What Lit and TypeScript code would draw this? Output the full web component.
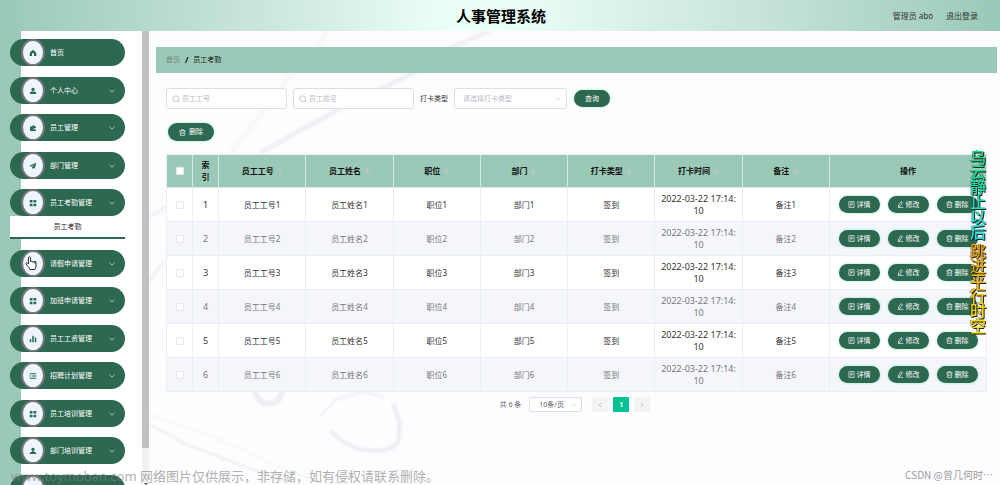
import { LitElement, html, css, svg, nothing } from "lit";
import { customElement, state } from "lit/decorators.js";

const icons: Record<string, unknown> = {
  home: svg`<path fill="currentColor" d="M8 1.500 1.500 7.500V14H6v-4a2 2 0 0 1 4 0v4h4.500V7.500z"/>`,
  user: svg`<circle cx="8" cy="4.800" r="3.300" fill="currentColor"/><path fill="currentColor" d="M1.500 14c0-3.500 2-5 4-5h5c2 0 4 1.500 4 5z"/>`,
  wallet: svg`<path fill="currentColor" d="M2 6 10 2l1.500 3H14v3h-3.500a1.500 1.500 0 0 0 0 3H14v3H2z"/><circle cx="11.500" cy="9.500" r="1" fill="currentColor"/>`,
  plane: svg`<path fill="currentColor" d="M14.500 1.500 1 7.500l3.500 2 6-4.500-4.500 5.500V14.500l2.300-2.800 3.200 1.800z"/>`,
  grid: svg`<path fill="currentColor" d="M1.500 2h5.500v5H1.500zM9 2h5.500v5H9zM1.500 9.500h5.500v5H1.500zM9 9.500h5.500v5H9z"/>`,
  bars: svg`<path fill="currentColor" d="M1.500 8h3v6.500h-3zM6.500 1.500h3v13h-3zM11.500 5h3v9.500h-3z"/>`,
  list: svg`<path fill="currentColor" d="M1.500 2.500h13v2h-13zM5.500 7h9v2h-9zM1.500 11.500h13v2h-13zM1.500 6v4L4 8z"/>`,
  person: svg`<circle cx="8" cy="4.500" r="3.200" fill="currentColor"/><path fill="currentColor" d="M6.500 7h3v2l5 2.500V14h-13v-2.500l5-2.500z"/>`,
  chevron: svg`<path fill="none" stroke="currentColor" stroke-width="1.600" d="m1.500 4.500 6.500 6.500 6.500-6.500"/>`,
  left: svg`<path fill="none" stroke="currentColor" stroke-width="2.200" d="M11 2.500 5.500 8l5.500 5.500"/>`,
  right: svg`<path fill="none" stroke="currentColor" stroke-width="2.200" d="M5 2.500 10.500 8 5 13.500"/>`,
  search: svg`<circle cx="7.500" cy="7.500" r="5.800" fill="none" stroke="currentColor" stroke-width="1.700"/><path stroke="currentColor" stroke-width="1.700" d="m11.500 11.500 3 3"/>`,
  trash: svg`<path fill="none" stroke="currentColor" stroke-width="1.500" d="M1 4h14M5.500 4V1.500h5V4M3 4v10.500h10V4M6.300 7v4.500M9.700 7v4.500"/>`,
  doc: svg`<path fill="none" stroke="currentColor" stroke-width="1.500" d="M2 1.500h12v13H2zM5 5h6M5 8h6M5 11h3.500"/>`,
  edit: svg`<path fill="none" stroke="currentColor" stroke-width="1.500" d="m9 1.500 3.500 2.200-5.500 8-3.800 1.800.300-4zM2 14.700h12.500"/>`,
};

const icon = (name: string, cls = "icon") =>
  html`<svg class=${cls} viewBox="0 0 16 16" aria-hidden="true">${icons[name]}</svg>`;

interface MenuItem {
  label: string;
  icon: string;
  children?: string[];
  leaf?: boolean;
  pointer?: boolean;
}

const menu: MenuItem[] = [
  { label: "首页", icon: "home", leaf: true },
  { label: "个人中心", icon: "user" },
  { label: "员工管理", icon: "wallet" },
  { label: "部门管理", icon: "plane" },
  { label: "员工考勤管理", icon: "grid", children: ["员工考勤"] },
  { label: "请假申请管理", icon: "grid", pointer: true },
  { label: "加班申请管理", icon: "grid" },
  { label: "员工工资管理", icon: "bars" },
  { label: "招聘计划管理", icon: "list" },
  { label: "员工培训管理", icon: "grid" },
  { label: "部门培训管理", icon: "person" },
  { label: "", icon: "grid" },
];

const columns = ["员工工号", "员工姓名", "职位", "部门", "打卡类型", "打卡时间", "备注"];

@customElement("side-menu")
class SideMenu extends LitElement {
  static styles = css`
    :host {
      display: flex;
      flex: none;
      width: 149px;
      overflow: hidden;
      background: linear-gradient(90deg, #9ac9b7 21px, #fff 21px);
    }
    nav {
      flex: 1;
      display: flex;
      flex-direction: column;
      gap: 10px;
      padding: 8px 17px 0 10px;
      overflow: hidden;
    }
    .group {
      flex: none;
    }
    .group:nth-child(odd) {
      padding-bottom: 1px;
    }
    .item {
      display: flex;
      align-items: center;
      gap: 5px;
      width: 100%;
      height: 27px;
      padding: 0 10px 0 11px;
      border: 0;
      border-radius: 14px;
      background: #2d6850;
      color: #fff;
      font: inherit;
      text-align: left;
    }
    .label {
      flex: 1;
    }
    .badge {
      position: relative;
      box-sizing: border-box;
      display: grid;
      place-items: center;
      width: 24px;
      height: 27px;
      border: 2px solid #77757a;
      border-radius: 50%;
      background: #edf6ff;
      color: #2d6850;
    }
    .icon {
      width: 8px;
      height: 8px;
    }
    .arrow {
      width: 6px;
      height: 6px;
    }
    .hand {
      position: absolute;
      left: 2px;
      top: 4px;
      width: 12px;
      height: 14px;
    }
    .sub {
      display: block;
      height: 21px;
      line-height: 22px;
      border-bottom: 2px solid #2d6850;
      background: #fff;
      color: #222;
      text-align: center;
      text-decoration: none;
    }
    .track {
      display: flex;
      flex-direction: column;
      align-items: center;
      width: 7px;
      background: #f1f1f1;
    }
    .thumb {
      flex: 12;
      width: 7px;
      background: #c1c1c1;
    }
    .rest {
      flex: 1;
    }
    .down {
      border: 2px solid transparent;
      border-top-color: #505050;
      border-bottom: 0;
    }
  `;

  render() {
    return html`
      <nav>
        ${menu.map(
          (m) => html`<div class="group">
            <button class="item">
              <span class="badge">
                ${icon(m.icon)}
                ${m.pointer
                  ? html`<svg class="hand" viewBox="0 0 12 14">
                      <path fill="#fff" stroke="#333" stroke-width="1" stroke-linejoin="round"
                        d="M3.500 8V1.800c0-1.500 2-1.500 2 0V5.500l1-.300 1 .800 1.200-.200.800.900 1.500.300V10c0 1.500-1 2-1 3.500H5C4.500 11.500 2 10 1 7.500c-.300-1 1-1.300 1.500-.500z"/>
                    </svg>`
                  : nothing}
              </span>
              <span class="label">${m.label}</span>
              ${m.leaf ? nothing : icon("chevron", "arrow")}
            </button>
            ${m.children?.map((c) => html`<a class="sub" href="#">${c}</a>`) ?? nothing}
          </div>`
        )}
      </nav>
      <div class="track"><div class="thumb"></div><div class="rest"></div><div class="down"></div></div>
    `;
  }
}

@customElement("app-root")
class AppRoot extends LitElement {
  @state() private rows = [1, 2, 3, 4, 5, 6];

  static styles = css`
    :host {
      position: relative;
      display: flex;
      flex-direction: column;
      height: 100vh;
      overflow: hidden;
      background: #fdfdff;
      color: #333;
      font: 7px/12px "Noto Sans", "Noto Sans CJK SC", sans-serif;
    }
    header {
      flex: none;
      display: grid;
      grid-template-columns: 1fr auto 1fr;
      align-items: center;
      height: 31px;
      padding: 0 22px 0 24px;
      background: linear-gradient(90deg, #9ac9b7, #c8e5d9 25%, #ecfff7 45%, #ecfff7 50%, #c8e5d9 75%, #9ac9b7);
    }
    h1 {
      grid-column: 2;
      margin: 0;
      font-size: 15px;
      line-height: 20px;
      color: #000;
    }
    .account {
      display: flex;
      justify-content: flex-end;
      gap: 13px;
      font-size: 8px;
    }
    .account a {
      color: inherit;
      text-decoration: none;
    }
    .body {
      flex: 1;
      display: flex;
      min-height: 0;
    }
    main {
      position: relative;
      flex: 1;
      min-width: 0;
      padding: 16px 3px 0 7px;
    }
    .decor {
      position: absolute;
      left: 0;
      top: 0;
      width: 851px;
      height: 454px;
    }
    .crumbs,
    .content {
      position: relative;
    }
    .crumbs {
      display: flex;
      align-items: center;
      gap: 5px;
      height: 26px;
      padding: 0 10px;
      background: #9ac9b7;
      color: #111;
    }
    .crumbs a {
      color: #708a80;
      text-decoration: none;
    }
    .crumbs b {
      font-size: 8px;
    }
    .content {
      padding: 15px 10px 0;
    }
    form {
      display: flex;
      align-items: center;
      gap: 6px;
      height: 21px;
    }
    .field {
      box-sizing: border-box;
      display: flex;
      align-items: center;
      gap: 2px;
      width: 121px;
      height: 21px;
      padding: 0 5px;
      border: 1px solid #dcdfe6;
      border-radius: 3px;
      background: #fff;
      color: #b8bcc5;
    }
    .field.pick {
      width: 113px;
      padding-left: 8px;
    }
    .field input,
    .field select,
    .size select {
      flex: 1;
      min-width: 0;
      padding: 0;
      border: 0;
      outline: 0;
      appearance: none;
      background: none;
      font: inherit;
      color: inherit;
    }
    input::placeholder {
      color: #b8bcc5;
    }
    .icon {
      flex: none;
      width: 8px;
      height: 8px;
    }
    .small {
      flex: none;
      width: 6px;
      height: 6px;
    }
    .btn {
      display: inline-flex;
      align-items: center;
      justify-content: center;
      gap: 2px;
      width: 41px;
      height: 17px;
      padding: 0;
      border: 0;
      border-radius: 9px;
      background: #2d6850;
      box-shadow: 0 0 3px #9fe8c8;
      color: #fff;
      font: inherit;
    }
    .btn .icon {
      width: 7px;
      height: 7px;
    }
    .query {
      width: 36px;
      margin-left: 1px;
    }
    .tools {
      padding: 14px 2px 13px;
      display: flex;
    }
    .tools .btn {
      width: 46px;
      height: 18px;
      gap: 3px;
    }
    table {
      width: 100%;
      table-layout: fixed;
      border-collapse: separate;
      border-spacing: 0;
      border-left: 1px solid #ebeef5;
      border-top: 1px solid #ebeef5;
      font-size: 8px;
      text-align: center;
    }
    .narrow {
      width: 26px;
    }
    .wide {
      width: 157px;
    }
    th,
    td {
      box-sizing: border-box;
      padding: 0 5px;
      border-right: 1px solid #ebeef5;
      border-bottom: 1px solid #ebeef5;
      word-break: break-all;
    }
    th {
      height: 33px;
      background: #9ac9b7;
      border-color: #d5e8e1;
      color: #111;
    }
    td {
      height: 34px;
      background: #fff;
    }
    tr:nth-child(even) td {
      background: #f4f6fb;
      color: #777;
    }
    .num {
      font-size: 9px;
    }
    .sort {
      width: 5px;
      height: 8px;
      margin-left: 4px;
      vertical-align: -1px;
    }
    input[type="checkbox"] {
      appearance: none;
      display: block;
      width: 8px;
      height: 8px;
      margin: 0 auto;
      border: 1px solid #e6e8ed;
      border-radius: 1px;
      background: #fff;
      box-sizing: border-box;
    }
    .ops {
      display: flex;
      justify-content: center;
      gap: 8px;
      font-size: 7px;
    }
    .pager {
      display: flex;
      justify-content: center;
      align-items: center;
      gap: 5px;
      padding: 5px 3px 0 0;
      color: #606266;
    }
    .size {
      box-sizing: border-box;
      display: flex;
      align-items: center;
      width: 53px;
      height: 15px;
      margin: 0 5px 0 3px;
      padding: 0 4px 0 9px;
      border: 1px solid #dcdfe6;
      border-radius: 2px;
      background: #fff;
      color: #606266;
    }
    .size .small {
      color: #c0c4cc;
    }
    .page {
      display: grid;
      place-items: center;
      width: 16px;
      height: 15px;
      padding: 0;
      border: 0;
      border-radius: 1px;
      background: #f4f4f5;
      color: #b4b8c0;
      font: inherit;
      font-weight: bold;
    }
    .page.on {
      background: #00c292;
      color: #fff;
    }
    .lyric {
      position: absolute;
      top: 150px;
      right: 14px;
      width: 16px;
      display: flex;
      flex-direction: column;
      gap: 4px;
      font-size: 16px;
      font-weight: 500;
      line-height: 15px;
      word-break: break-all;
      filter: drop-shadow(1px 1px 0 #222) drop-shadow(-1px 0 0 rgba(34, 34, 34, 0.5));
    }
    .lyric span {
      background: linear-gradient(#10e078, #18e8e8);
      background-clip: text;
      -webkit-background-clip: text;
      color: transparent;
    }
    .lyric .second {
      background-image: linear-gradient(#f0a000, #ffe800);
    }
    .notice,
    .credit {
      position: absolute;
      bottom: 0;
      color: rgba(130, 130, 130, 0.65);
      white-space: nowrap;
    }
    .notice {
      left: 11px;
      font-size: 13px;
      line-height: 18px;
    }
    .credit {
      right: 7px;
      bottom: 3px;
      font-family: "Noto Sans CJK SC", sans-serif;
      font-size: 10px;
      line-height: 14px;
      color: #999ba0;
    }
  `;

  private backdrop() {
    return html`<svg class="decor" viewBox="0 0 851 454" aria-hidden="true">
      <defs>
        <filter id="soft"><feGaussianBlur stdDeviation="1.200" /></filter>
      </defs>
      <g fill="none" filter="url(#soft)">
        <path d="M341 0 308 14 264 42 188 79 111 122" stroke="#eff0f4" stroke-width="5" />
        <path d="M178 2 144 42 74 132" stroke="#f8f8fb" stroke-width="5" />
        <path d="M0 186 17 176M0 252l6-10 10-12" stroke="#f0f2f7" stroke-width="4" />
        <path d="M106 360c4 18 26 18 28-4" stroke="#eceef3" stroke-width="6" />
        <path d="M171 386 186 369 213 361 236 366" stroke="#edeff4" stroke-width="2" />
        <path d="M244 372 251 392 249 412C240 421 224 421 208 418L192 409 182 400" stroke="#ebedf4" stroke-width="4" />
        <path d="M0 393 37 413 97 436 140 451" stroke="#ededf1" stroke-width="2" />
        <path d="M0 383 60 404 140 440 180 454" stroke="#f6f7fa" stroke-width="2" />
      </g>
    </svg>`;
  }

  private row(n: number) {
    return html`<tr>
      <td><input type="checkbox" aria-label="选择 ${n}" /></td>
      <td class="num">${n}</td>
      <td>员工工号${n}</td>
      <td>员工姓名${n}</td>
      <td>职位${n}</td>
      <td>部门${n}</td>
      <td>签到</td>
      <td class="num">2022-03-22 17:14:10</td>
      <td>备注${n}</td>
      <td>
        <div class="ops">
          <button class="btn">${icon("doc")}详情</button>
          <button class="btn">${icon("edit")}修改</button>
          <button class="btn">${icon("trash")}删除</button>
        </div>
      </td>
    </tr>`;
  }

  render() {
    return html`
      <header>
        <h1>人事管理系统</h1>
        <div class="account"><span>管理员 abo</span><a href="#">退出登录</a></div>
      </header>
      <div class="body">
        <side-menu></side-menu>
        <main>
          ${this.backdrop()}
          <div class="crumbs"><a href="#">首页</a><b>/</b><span>员工考勤</span></div>
          <div class="content">
            <form>
              <label class="field">${icon("search")}<input placeholder="员工工号" aria-label="员工工号" /></label>
              <label class="field">${icon("search")}<input placeholder="员工姓名" aria-label="员工姓名" /></label>
              <label for="kind">打卡类型</label>
              <div class="field pick">
                <select id="kind"><option>请选择打卡类型</option></select>${icon("chevron", "small")}
              </div>
              <button class="btn query" type="button">查询</button>
            </form>
            <div class="tools"><button class="btn">${icon("trash")}删除</button></div>
            <table>
              <colgroup>
                <col class="narrow" /><col class="narrow" />
                ${columns.map(() => html`<col />`)}
                <col class="wide" />
              </colgroup>
              <thead>
                <tr>
                  <th><input type="checkbox" aria-label="全选" /></th>
                  <th>索引</th>
                  ${columns.map(
                    (c) => html`<th>${c}<svg class="sort" viewBox="0 0 5 8" aria-hidden="true"><path fill="#bfc4cb" d="M0 3.500 2.500 1 5 3.500zM0 4.500h5L2.500 7z"/></svg></th>`
                  )}
                  <th>操作</th>
                </tr>
              </thead>
              <tbody>${this.rows.map((n) => this.row(n))}</tbody>
            </table>
            <div class="pager">
              <span>共 6 条</span>
              <div class="size">
                <select aria-label="每页条数"><option>10条/页</option></select>${icon("chevron", "small")}
              </div>
              <button class="page" aria-label="上一页">${icon("left", "small")}</button>
              <button class="page on">1</button>
              <button class="page" aria-label="下一页">${icon("right", "small")}</button>
            </div>
          </div>
        </main>
      </div>
      <div class="lyric"><span>乌云静止以后</span><span class="second">跳进平行时空</span></div>
      <div class="notice">www.toymoban.com 网络图片仅供展示，非存储，如有侵权请联系删除。</div>
      <div class="credit">CSDN @曾几何时…</div>
    `;
  }
}
